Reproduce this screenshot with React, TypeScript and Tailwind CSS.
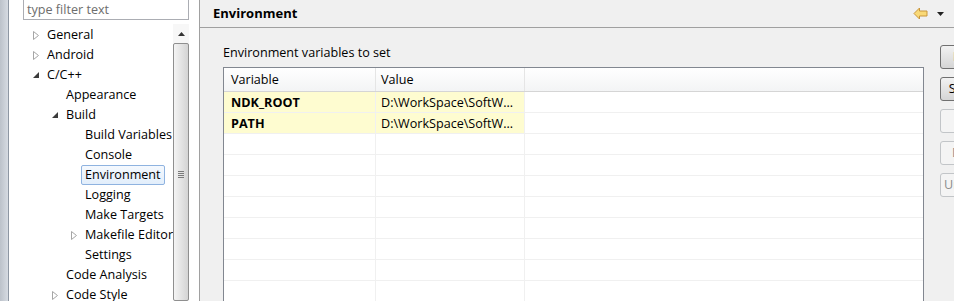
import React from "react"

interface TreeItem {
  label: string
  level: number
  arrow?: "closed" | "open"
  selected?: boolean
}

const tree: TreeItem[] = [
  { label: "General", level: 0, arrow: "closed" },
  { label: "Android", level: 0, arrow: "closed" },
  { label: "C/C++", level: 0, arrow: "open" },
  { label: "Appearance", level: 1 },
  { label: "Build", level: 1, arrow: "open" },
  { label: "Build Variables", level: 2 },
  { label: "Console", level: 2 },
  { label: "Environment", level: 2, selected: true },
  { label: "Logging", level: 2 },
  { label: "Make Targets", level: 2 },
  { label: "Makefile Editor", level: 2, arrow: "closed" },
  { label: "Settings", level: 2 },
  { label: "Code Analysis", level: 1 },
  { label: "Code Style", level: 1, arrow: "closed" },
]

const envVars = [
  { name: "NDK_ROOT", value: "D:\\WorkSpace\\SoftW..." },
  { name: "PATH", value: "D:\\WorkSpace\\SoftW..." },
]

const buttons = [
  { label: "New...", enabled: true },
  { label: "Select...", enabled: true },
  { label: "Edit...", enabled: false },
  { label: "Delete", enabled: false },
  { label: "Undefine", enabled: false },
]

const indent = ["pl-[20px]", "pl-[39px]", "pl-[58px]"]

function Arrow({ kind }: { kind?: "closed" | "open" }) {
  if (kind === "closed") {
    return (
      <svg width="7" height="9" viewBox="0 0 7 9">
        <path d="M0.5 0.5 L5.5 4.5 L0.5 8.5 Z" fill="#fff" stroke="#a6a6a6" />
      </svg>
    )
  }
  if (kind === "open") {
    return (
      <svg width="6" height="6" viewBox="0 0 6 6">
        <path d="M6 0 L6 6 L0 6 Z" fill="#3b3b3b" />
      </svg>
    )
  }
  return null
}

function TreeRow({ item }: { item: TreeItem }) {
  return (
    <div className={`flex items-center h-[20px] ${indent[item.level]}`}>
      <div className="w-[14px] h-[20px] flex items-center justify-center shrink-0">
        <Arrow kind={item.arrow} />
      </div>
      <span
        className={`h-[20px] leading-[18px] px-[3px] border rounded-[2px] whitespace-nowrap ${
          item.selected
            ? "border-[#8fb3e0] bg-gradient-to-b from-[#f5f9fe] to-[#e2eefb]"
            : "border-transparent"
        }`}
      >
        {item.label}
      </span>
    </div>
  )
}

export default function App() {
  return (
    <div className="w-[954px] h-[301px] overflow-hidden flex bg-[#f0f0f0] text-[12.6px] text-black font-['Open_Sans','Noto_Sans',sans-serif]">
      {/* window edge */}
      <div className="w-[9px] shrink-0 bg-gradient-to-r from-[#bcc2ca] to-[#d6dbe2] border-r border-[#8e97a3]" />

      {/* preference tree */}
      <div className="w-[191px] shrink-0 bg-white border-r border-[#a0a0a0] flex flex-col">
        <div className="ml-[14px] w-[166px] h-[20px] shrink-0 border-x border-b border-[#abadb3] flex items-center pl-[3px] pt-[2px] text-[#6d6d6d]">
          type filter text
        </div>
        <div className="flex mt-[4px] flex-1 min-h-0">
          <div className="w-[164px] overflow-hidden pt-px">
            {tree.map((item) => (
              <TreeRow key={item.label} item={item} />
            ))}
          </div>
          <div className="w-[16px] flex flex-col bg-[#f7f7f7]">
            <div className="h-[19px] flex items-center justify-center">
              <svg width="7" height="4" viewBox="0 0 7 4">
                <path d="M3.5 0 L7 4 L0 4 Z" fill="#333" />
              </svg>
            </div>
            <div className="flex-1 border border-[#8f8f8f] rounded-[2px] bg-gradient-to-r from-[#f4f4f4] to-[#d4d4d4] flex flex-col items-center pt-[127px]">
              <div className="w-[6px] flex flex-col gap-[1px]">
                <div className="h-px bg-[#7a7a7a]" />
                <div className="h-px bg-[#7a7a7a]" />
                <div className="h-px bg-[#7a7a7a]" />
                <div className="h-px bg-[#7a7a7a]" />
              </div>
            </div>
          </div>
        </div>
      </div>

      {/* right page */}
      <div className="flex-1 flex flex-col min-w-0">
        <div className="h-[28px] shrink-0 border-b border-[#a0a0a0] flex items-center justify-between pl-[13px] pr-[10px]">
          <span className="font-bold text-[13px]">Environment</span>
          <div className="flex items-center gap-[9px]">
            <svg width="15" height="13" viewBox="0 0 15 13">
              <path d="M1 6.5 L6.5 1 V4 H14 V9 H6.5 V12 Z" fill="#f9d977" stroke="#c9963a" strokeLinejoin="round" />
            </svg>
            <svg width="7" height="4" viewBox="0 0 7 4">
              <path d="M0 0 L7 0 L3.5 4 Z" fill="#222" />
            </svg>
          </div>
        </div>

        <div className="flex pl-[23px] pt-[16px]">
          <div className="flex flex-col">
            <div className="h-[18px] leading-[18px]">Environment variables to set</div>
            <div className="mt-[5px] w-[701px] h-[260px] border border-[#828790] bg-white overflow-hidden">
              <div className="flex h-[24px] border-b border-[#d5d5d5] bg-gradient-to-b from-white to-[#f3f4f5]">
                <div className="w-[152px] border-r border-[#e5e5e5] pl-[7px] pt-[2px] flex items-center">Variable</div>
                <div className="w-[149px] border-r border-[#e5e5e5] pl-[5px] pt-[2px] flex items-center">Value</div>
                <div className="flex-1" />
              </div>
              {Array.from({ length: 10 }).map((_, i) => {
                const row = envVars[i]
                return (
                  <div key={i} className="flex h-[21px] border-b border-[#f0f0f0]">
                    <div
                      className={`w-[152px] border-r border-[#f0f0f0] pl-[7px] pt-[3px] flex items-center font-bold ${
                        row ? "bg-[#fefcd0]" : ""
                      }`}
                    >
                      {row?.name}
                    </div>
                    <div
                      className={`w-[149px] border-r border-[#f0f0f0] pl-[5px] pt-[3px] flex items-center ${
                        row ? "bg-[#fefcd0]" : ""
                      }`}
                    >
                      {row?.value}
                    </div>
                    <div className="flex-1" />
                  </div>
                )
              })}
            </div>
          </div>

          <div className="ml-[16px] mt-[1px] flex flex-col gap-[8px] shrink-0">
            {buttons.map((b) => (
              <div
                key={b.label}
                className={`w-[62px] h-[24px] rounded-[3px] border flex items-center justify-center whitespace-nowrap ${
                  b.enabled
                    ? "border-[#707070] bg-gradient-to-b from-[#f2f2f2] to-[#d5d5d5]"
                    : "border-[#c2c5c8] bg-[#f4f4f4] text-[#8d8d8d]"
                }`}
              >
                {b.label}
              </div>
            ))}
          </div>
        </div>
      </div>
    </div>
  )
}
